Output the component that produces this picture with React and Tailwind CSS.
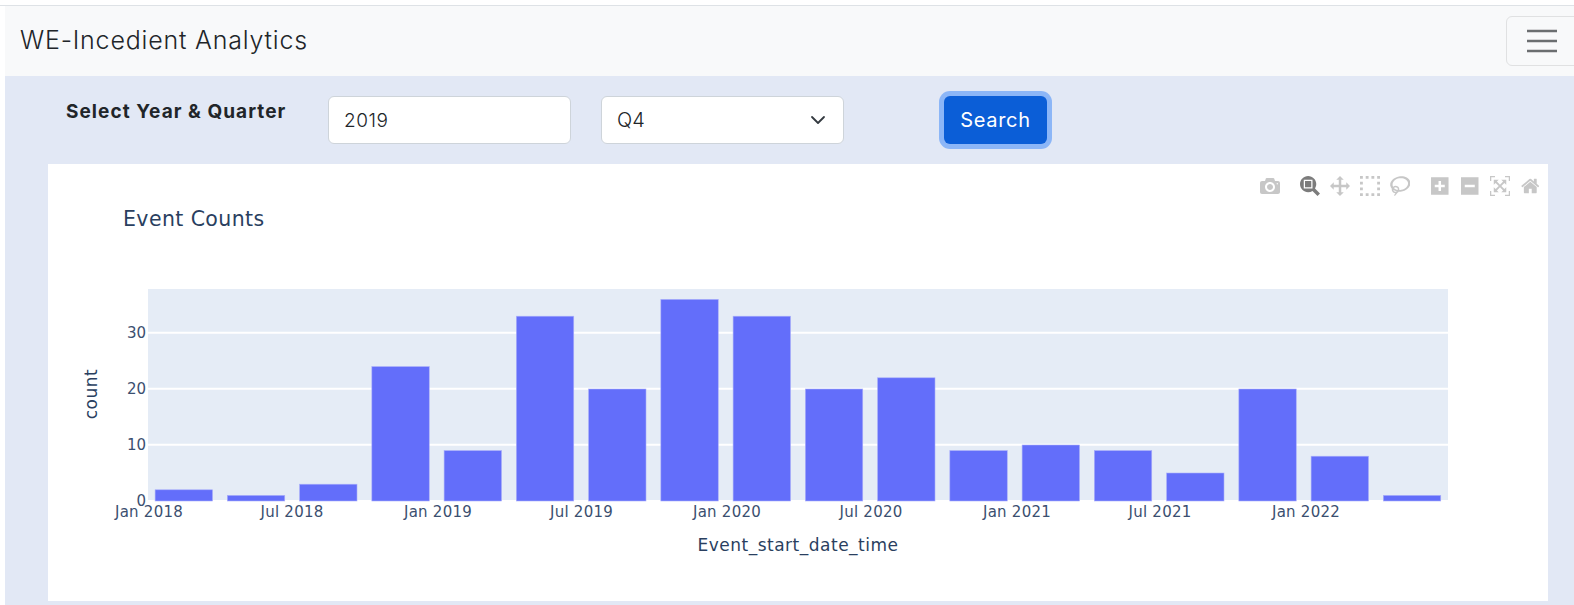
const counts = [2, 1, 3, 24, 9, 33, 20, 36, 33, 20, 22, 9, 10, 9, 5, 20, 8, 1];

const xTicks = [
  { x: 148, label: 'Jan 2018' },
  { x: 291, label: 'Jul 2018' },
  { x: 437, label: 'Jan 2019' },
  { x: 580.5, label: 'Jul 2019' },
  { x: 726, label: 'Jan 2020' },
  { x: 870, label: 'Jul 2020' },
  { x: 1016, label: 'Jan 2021' },
  { x: 1159, label: 'Jul 2021' },
  { x: 1305, label: 'Jan 2022' },
];

const yTicks = [
  { y: 445, label: '10' },
  { y: 389, label: '20' },
  { y: 333, label: '30' },
];

const modeIcons = [
  { name: 'camera', w: 1000, d: 'm500 450c-83 0-150-67-150-150 0-83 67-150 150-150 83 0 150 67 150 150 0 83-67 150-150 150z m400 150h-120c-16 0-34 13-39 29l-31 93c-6 15-23 28-40 28h-340c-16 0-34-13-39-28l-31-94c-6-15-23-28-40-28h-120c-55 0-100-45-100-100v-450c0-55 45-100 100-100h800c55 0 100 45 100 100v450c0 55-45 100-100 100z m-400-550c-138 0-250 112-250 250 0 138 112 250 250 250 138 0 250-112 250-250 0-138-112-250-250-250z m365 380c-19 0-35 16-35 35 0 19 16 35 35 35 19 0 35-16 35-35 0-19-16-35-35-35z', gap: true },
  { name: 'zoom', w: 1000, active: true, d: 'm1000-25l-250 251c40 63 63 138 63 218 0 224-182 406-407 406-224 0-406-182-406-406s183-406 407-406c80 0 155 22 218 62l250-250 125 125z m-812 250l0 438 437 0 0-438-437 0z m62 375l313 0 0-312-313 0 0 312z' },
  { name: 'pan', w: 1000, d: 'm1000 350l-187 188 0-125-250 0 0 250 125 0-188 187-187-187 125 0 0-250-250 0 0 125-188-188 186-187 0 125 252 0 0-250-125 0 187-188 188 188-125 0 0 250 250 0 0-126 187 188z' },
  { name: 'select', w: 1000, d: 'm0 850l0-143 143 0 0 143-143 0z m286 0l0-143 143 0 0 143-143 0z m285 0l0-143 143 0 0 143-143 0z m286 0l0-143 143 0 0 143-143 0z m-857-286l0-143 143 0 0 143-143 0z m857 0l0-143 143 0 0 143-143 0z m-857-285l0-143 143 0 0 143-143 0z m857 0l0-143 143 0 0 143-143 0z m-857-286l0-143 143 0 0 143-143 0z m286 0l0-143 143 0 0 143-143 0z m285 0l0-143 143 0 0 143-143 0z m286 0l0-143 143 0 0 143-143 0z' },
  { name: 'lasso', w: 1031, d: 'm1018 538c-36 207-290 336-568 286-277-48-473-256-436-463 10-57 36-108 76-151-13-66 11-137 68-183 34-28 75-41 114-42l-55-70 0 0c-2-1-3-2-4-3-10-14-8-34 5-45 14-11 34-8 45 4 1 1 2 3 2 5l0 0 113 140c16 11 31 24 45 40 4 3 6 7 8 11 48-3 100 0 151 9 278 48 473 255 436 462z m-624-379c-80 14-149 48-197 96 42 42 109 47 156 9 33-26 47-66 41-105z m-187-74c-19 16-33 37-39 60 50-32 109-55 174-68-42-25-95-24-135 8z m360 75c-34-7-69-9-102-8 8 62-16 128-68 170-73 59-175 54-244-5-9 20-16 40-20 61-28 159 121 317 333 354s407-60 434-217c28-159-121-318-333-355z', gap: true },
  { name: 'plus', w: 875, d: 'm1 787l0-875 875 0 0 875-875 0z m687-500l-187 0 0-187-125 0 0 187-188 0 0 125 188 0 0 187 125 0 0-187 187 0 0-125z' },
  { name: 'minus', w: 875, d: 'm0 788l0-876 875 0 0 876-875 0z m688-500l-500 0 0 125 500 0 0-125z' },
  { name: 'autoscale', w: 1000, d: 'm250 850l-187 0-63 0 0-62 0-188 63 0 0 188 187 0 0 62z m688 0l-188 0 0-62 188 0 0-188 62 0 0 188 0 62-62 0z m-875-938l0 188-63 0 0-188 0-62 63 0 187 0 0 62-187 0z m875 188l0-188-188 0 0-62 188 0 62 0 0 62 0 188-62 0z m-125 188l-1 0-93-94-156 156 156 156 92-93 2 0 0 250-250 0 0-2 93-92-156-156-156 156 94 92 0 2-250 0 0-250 0 0 93 93 157-156-157-156-93 94 0 0 0-250 250 0 0 0-94 93 156 157 156-157-93-93 0 0 250 0 0 250z' },
  { name: 'home', w: 928.6, d: 'm786 296v-267q0-15-11-26t-25-10h-214v214h-143v-214h-214q-15 0-25 10t-11 26v267q0 1 0 2t0 2l321 264 321-264q1-1 1-4z m124 39l-34-41q-5-5-12-6h-2q-7 0-12 3l-386 322-386-322q-7-4-13-4-7 2-12 7l-35 41q-4 5-3 13t6 12l401 334q18 15 42 15t43-15l136-114v109q0 8 5 13t13 5h107q8 0 13-5t5-13v-227l122-102q5-5 6-12t-4-13z' },
];

const ModeBar = () => (
  <div className="absolute right-[3px] top-[7px] flex">
    {modeIcons.map((icon) => (
      <div key={icon.name} className={icon.gap ? 'mr-[10px] flex h-[30px] w-[30px] items-center justify-center' : 'flex h-[30px] w-[30px] items-center justify-center'}>
        <svg height="20" viewBox={`0 0 ${icon.w} 1000`} className={icon.active ? 'fill-[#444444]/70' : 'fill-[#444444]/30'}>
          <path d={icon.d} transform="matrix(1 0 0 -1 0 850)" />
        </svg>
      </div>
    ))}
  </div>
);

const BarChart = () => (
  <svg className="block h-[437px] w-[1500px]" viewBox="48 164 1500 437" fontFamily="'DejaVu Sans', sans-serif" fill="#2a3f5f">
    <text x="123" y="226" fontSize="20.5" letterSpacing="0.4">Event Counts</text>

    <rect x="148" y="289" width="1300" height="211" fill="#e5ecf6" />
    {yTicks.map((t) => (
      <line key={t.label} x1="148" x2="1448" y1={t.y - 0.3} y2={t.y - 0.3} stroke="#ffffff" strokeWidth="2" />
    ))}

    {counts.map((c, i) => (
      <rect
        key={i}
        x={155.1 + i * 72.25}
        y={501 - c * 5.6}
        width="57.4"
        height={c * 5.6}
        fill="#636efa"
        stroke="#a9aefb"
        strokeWidth="0.6"
      />
    ))}

    <g fill="#3b4f70">
      {yTicks.map((t) => (
        <text key={t.label} x="146" y={t.y + 5} fontSize="15" textAnchor="end">{t.label}</text>
      ))}
      <text x="146" y="505.5" fontSize="15" textAnchor="end">0</text>
      {xTicks.map((t) => (
        <text key={t.label} x={t.x + 1} y="517" fontSize="15" letterSpacing="0.25" textAnchor="middle">{t.label}</text>
      ))}
    </g>

    <text x="798" y="551" fontSize="17" letterSpacing="0.5" textAnchor="middle">Event_start_date_time</text>
    <text x="97" y="394" fontSize="17" letterSpacing="0.5" textAnchor="middle" transform="rotate(-90 97 394)">count</text>
  </svg>
);

export default function App() {
  return (
    <div className="h-[605px] w-[1574px] overflow-hidden bg-white pt-[5px] pl-[5px] font-['Inter',sans-serif] text-[#212529]">
      <div className="-ml-[5px] h-px bg-[#dee2e6]" />
      <nav className="flex h-[70px] items-center justify-between bg-[#f8f9fa] pl-[15px]">
        <span className="text-[25px] font-light tracking-[0.8px] text-[#212529]">WE-Incedient Analytics</span>
        <button className="-mr-[6px] flex h-[50px] w-[74px] items-center rounded-md border border-[#e0e1e2] pl-[20px]">
          <svg width="30" height="30" viewBox="0 0 30 30" stroke="#6b6e70" strokeWidth="2.5">
            <path d="M0 5h30M0 15h30M0 25h30" />
          </svg>
        </button>
      </nav>

      <div className="h-[529px] bg-[#e2e8f5]">
        <div className="flex h-[88px] items-start pl-[61px] pt-[20px]">
          <label className="mt-[2px] w-[262px] text-[19px] font-bold tracking-[1.05px]">Select Year &amp; Quarter</label>
          <input
            defaultValue="2019"
            className="h-[48px] w-[243px] rounded-md border border-[#ced4da] bg-white px-[15px] text-[19px] font-light tracking-[0.5px] text-[#212529]"
          />
          <div className="relative ml-[30px] w-[243px]">
            <select defaultValue="Q4" className="h-[48px] w-full appearance-none rounded-md border border-[#ced4da] bg-white px-[15px] text-[20px] font-light text-[#212529]">
              <option>Q1</option>
              <option>Q2</option>
              <option>Q3</option>
              <option>Q4</option>
            </select>
            <svg className="pointer-events-none absolute right-[18px] top-[16px]" width="16" height="16" viewBox="0 0 16 16" fill="none" stroke="#343a40" strokeWidth="1.8" strokeLinecap="round" strokeLinejoin="round">
              <path d="m2 5 6 6 6-6" />
            </svg>
          </div>
          <button className="ml-[100px] h-[48px] w-[103px] rounded-md bg-[#0b5ed7] text-[20px] tracking-[0.7px] text-white ring-[5px] ring-[#8cb6f7]">Search</button>
        </div>

        <div className="relative ml-[43px] w-[1500px] bg-white">
          <ModeBar />
          <BarChart />
        </div>
      </div>
    </div>
  );
}
